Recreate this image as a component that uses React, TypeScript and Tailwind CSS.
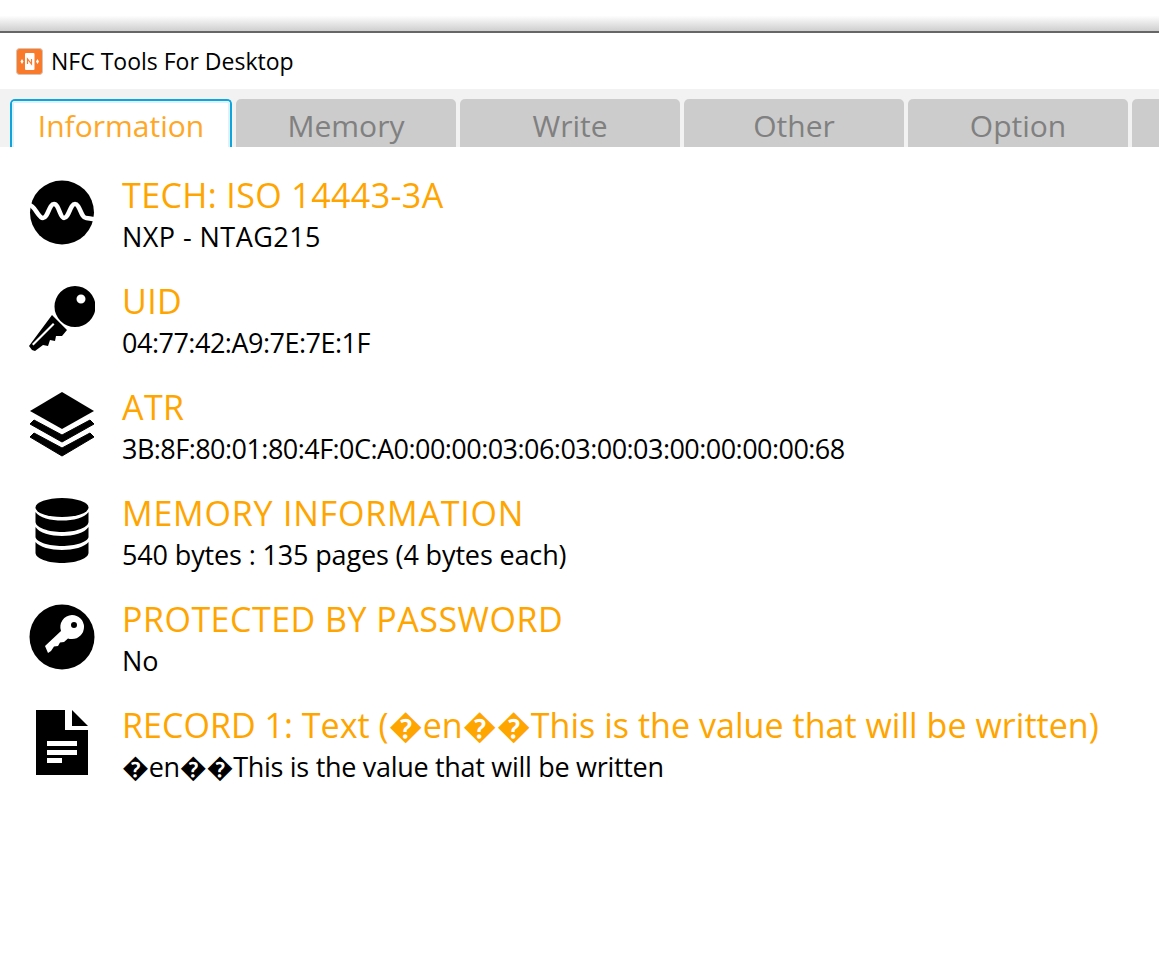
const FONT = "font-['Open_Sans','Noto_Sans',sans-serif]";

const WaveIcon = () => (
  <svg width="66" height="66" viewBox="0 0 66 66">
    <circle cx="33" cy="32.500" r="32" fill="#000" />
    <path
      d="M0 25 C6 25 9 38 14 38 C19 38 20 24 25 24 C30 24 31 38 35 38 C40 38 41 24 46 24 C51 24 52 38 57 38 C60 38 62 39 66 39"
      fill="none"
      stroke="#fff"
      strokeWidth="4.5"
    />
  </svg>
);

const KeyIcon = () => (
  <svg width="66" height="66" viewBox="0 0 66 66">
    <path
      fillRule="evenodd"
      d="M46 0 A20.5 20.5 0 1 1 46 41 A20.5 20.5 0 1 1 46 0 Z M52 8.500 A4.500 4.500 0 1 0 52 17.500 A4.500 4.500 0 1 0 52 8.500 Z"
      fill="#000"
    />
    <path
      fillRule="evenodd"
      d="M23 29 L38 44 L33 50 L27 50 L26 55 L21 54 L19 60 L14 59 L6 65 L3 64 L0 60 Z M24 37 L3 58 L4.500 59.500 L25.500 38.500 Z"
      fill="#000"
    />
  </svg>
);

const LayersIcon = () => (
  <svg width="66" height="66" viewBox="0 0 66 66">
    <path d="M33 0 L65 19 L33 37 L1 19 Z" fill="#000" />
    <path d="M5 28 L33 43 L61 28 L65 32 L33 50 L1 32 Z" fill="#000" stroke="#000" strokeLinejoin="round" />
    <path d="M5 41 L33 56 L61 41 L65 45 L33 64 L1 45 Z" fill="#000" stroke="#000" strokeLinejoin="round" />
  </svg>
);

const DatabaseIcon = () => (
  <svg width="66" height="66" viewBox="0 0 66 66">
    <ellipse cx="33" cy="9.500" rx="26.500" ry="9.500" fill="#000" />
    <path d="M6.500 14 C10 20 22 22.500 33 22.500 C44 22.500 56 20 59.500 14 L59.500 24 C59 30 46 34 33 34 C20 34 7 30 6.500 24 Z" fill="#000" />
    <path d="M6.500 29 C10 35 22 38 33 38 C44 38 56 35 59.500 29 L59.500 39 C59 44 46 48 33 48 C20 48 7 44 6.500 39 Z" fill="#000" />
    <path d="M6.500 44 C10 49 22 52 33 52 C44 52 56 49 59.500 44 L59.500 55 C59 61 46 65 33 65 C20 65 7 61 6.500 55 Z" fill="#000" />
  </svg>
);

const LockKeyIcon = () => (
  <svg width="66" height="66" viewBox="0 0 66 66">
    <circle cx="33" cy="33" r="32.500" fill="#000" />
    <path
      fillRule="evenodd"
      d="M43 11 A12 12 0 1 1 43 35 A12 12 0 0 1 39 34.500 L35 38 L31 38.500 L29 42 L25 42.500 L22 47 L19 49 L16 42 L32 27 A12 12 0 0 1 43 11 Z M45 18 A3 3 0 1 0 45 24 A3 3 0 1 0 45 18 Z"
      fill="#fff"
    />
  </svg>
);

const FileIcon = () => (
  <svg width="66" height="66" viewBox="0 0 66 66">
    <path
      fillRule="evenodd"
      d="M7 0 L36 0 L36 20 L59 20 L59 65 L7 65 Z M18 31 L18 36 L48 36 L48 31 Z M18 40 L18 45 L48 45 L48 40 Z M18 48 L18 53 L33 53 L33 48 Z"
      fill="#000"
    />
    <path d="M43 0 L59 16 L43 16 Z" fill="#000" />
  </svg>
);

const NfcLogo = () => (
  <svg width="27" height="27" viewBox="0 0 27 27">
    <rect x="0.500" y="0.500" width="26" height="26" rx="3" fill="#f97a2b" stroke="#d9c4b8" />
    <rect x="9" y="5" width="9.500" height="17" rx="1" fill="#fff" />
    <path d="M11.500 16 L11.500 11 L15.500 16 L15.500 11" fill="none" stroke="#f97a2b" strokeWidth="1.200" />
    <path d="M6 11 L7.500 13.500 L6 16 L4.500 13.500 Z M21.500 11 L23 13.500 L21.500 16 L20 13.500 Z" fill="#fff" />
  </svg>
);

const tabs = ["Memory", "Write", "Other", "Option"];

const rows = [
  {
    icon: <WaveIcon />,
    title: "TECH: ISO 14443-3A",
    titleClass: "tracking-[0.4px]",
    value: "NXP - NTAG215",
    valueClass: "tracking-[0.45px]",
  },
  {
    icon: <KeyIcon />,
    title: "UID",
    titleClass: "tracking-[0.4px]",
    value: "04:77:42:A9:7E:7E:1F",
    valueClass: "tracking-[-0.5px]",
  },
  {
    icon: <LayersIcon />,
    title: "ATR",
    titleClass: "tracking-[0.4px]",
    value: "3B:8F:80:01:80:4F:0C:A0:00:00:03:06:03:00:03:00:00:00:00:68",
    valueClass: "tracking-[-0.54px]",
  },
  {
    icon: <DatabaseIcon />,
    title: "MEMORY INFORMATION",
    titleClass: "tracking-[0.8px]",
    value: "540 bytes : 135 pages (4 bytes each)",
    valueClass: "tracking-[-0.14px]",
  },
  {
    icon: <LockKeyIcon />,
    title: "PROTECTED BY PASSWORD",
    titleClass: "tracking-[0.5px]",
    value: "No",
    valueClass: "",
  },
  {
    icon: <FileIcon />,
    title: "RECORD 1: Text (\uFFFDen\uFFFD\uFFFDThis is the value that will be written)",
    titleClass: "tracking-[0.04px]",
    value: "\uFFFDen\uFFFD\uFFFDThis is the value that will be written",
    valueClass: "tracking-[-0.3px]",
  },
];

export default function App() {
  return (
    <div className={`${FONT} w-[1159px] h-[977px] bg-white overflow-hidden`}>
      {/* shadow of the window above */}
      <div className="h-[31px] bg-gradient-to-b from-white from-50% to-[#cfcfcf]" />
      <div className="h-[2px] bg-[#666666]" />

      {/* Title bar */}
      <div className="h-[56px] flex items-center pl-[16px] gap-[8px]">
        <NfcLogo />
        <span className="text-[23px] leading-none text-black">NFC Tools For Desktop</span>
      </div>

      {/* Tabs */}
      <div className="h-[58px] bg-[#f2f2f2] pt-[10px] pl-[10px] flex gap-[4px] overflow-hidden">
        <div className="w-[222px] h-[48px] shrink-0 rounded-t-[5px] border-2 border-b-0 border-[#0ea5dc] bg-white">
          <div className="w-full h-full pt-[2px] rounded-t-[3px] border-2 border-b-0 border-[#dff2fb] flex justify-center items-center text-[30px] leading-none text-[#ffa726]">
            Information
          </div>
        </div>
        {tabs.map((tab) => (
          <div
            key={tab}
            className="w-[220px] h-[48px] pt-[6px] shrink-0 rounded-t-[5px] bg-[#cccccc] flex items-center justify-center text-[30px] leading-none text-[#808080]"
          >
            {tab}
          </div>
        ))}
        <div className="w-[220px] h-[48px] shrink-0 rounded-t-[5px] bg-[#cccccc]" />
      </div>

      {/* Info rows */}
      <div className="pt-[28px] pl-[29px] flex flex-col gap-[26px]">
        {rows.map((row) => (
          <div key={row.title} className="h-[80px] flex gap-[27px]">
            <div className="w-[66px] h-[66px] mt-[5px] shrink-0">{row.icon}</div>
            <div className="flex flex-col">
              <div className={`h-[40px] text-[34px] leading-[40px] text-[#ffa500] whitespace-nowrap ${row.titleClass}`}>
                {row.title}
              </div>
              <div className={`h-[36px] mt-[4px] text-[27px] leading-[36px] text-black whitespace-nowrap ${row.valueClass}`}>
                {row.value}
              </div>
            </div>
          </div>
        ))}
      </div>
    </div>
  );
}
